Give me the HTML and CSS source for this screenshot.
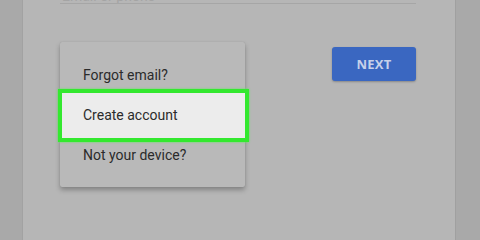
FILE: index.html
```html
<!DOCTYPE html>
<html>
<head>
<meta charset="utf-8">
<link rel="stylesheet" href="styles.css">
</head>
<body>
<div class="page">
  <div class="card">
    <div class="field"><span class="field-text">Email or phone</span></div>
    <div class="row">
      <div class="menu">
        <div class="item">Forgot email?</div>
        <div class="item active">Create account</div>
        <div class="item">Not your device?</div>
      </div>
      <button class="next">NEXT</button>
    </div>
  </div>
</div>
</body>
</html>
```

FILE: styles.css
```css
* { box-sizing: border-box; }
html, body { margin: 0; padding: 0; }
body {
  width: 480px;
  height: 240px;
  overflow: hidden;
  background: #a9a9a9;
  font-family: Roboto, "Liberation Sans", Arial, sans-serif;
}
.page {
  height: 240px;
  padding: 0 24px 0 22px;
}
.card {
  height: 240px;
  background: #b6b6b6;
  border-left: 1px solid #a2a2a2;
  border-right: 1px solid #a0a0a0;
  padding: 0 39px 0 37px;
}
.field {
  height: 4px;
  border-bottom: 1px solid #a6a6a6;
  position: relative;
  overflow: hidden;
}
.field-text {
  position: absolute;
  left: 2px;
  top: -12px;
  font-size: 14px;
  color: #a4a4a4;
}
.row {
  display: flex;
  justify-content: space-between;
  align-items: flex-start;
  margin-top: 38px;
}
.menu {
  width: 185px;
  height: 145px;
  background: #b9b9b9;
  box-shadow: 0 3px 5px rgba(0,0,0,0.28), 0 0 1px rgba(0,0,0,0.15);
  border-radius: 2px;
  padding-top: 20px;
  display: flex;
  flex-direction: column;
}
.item {
  height: 27px;
  padding-left: 23px;
  font-size: 14px;
  color: #2b2b2b;
  line-height: 27px;
}
.item.active {
  height: 53px;
  line-height: 45px;
  margin: 0 -4px 0 -2px;
  padding-left: 21px;
  background: #ececec;
  border: 4px solid #33e82f;
  box-shadow: 0 0 2px #5bf056;
}
.item.active + .item {
  height: 26px;
  line-height: 26px;
}
.next {
  margin-top: 5px;
  width: 84px;
  height: 34px;
  border: none;
  border-radius: 3px;
  background: #3a67c1;
  color: #c6d1ea;
  font-family: "Open Sans", Roboto, "Liberation Sans", sans-serif;
  font-weight: 700;
  font-size: 13px;
  letter-spacing: 0.2px;
  box-shadow: 0 1px 2px rgba(0,0,0,0.25);
}
```
